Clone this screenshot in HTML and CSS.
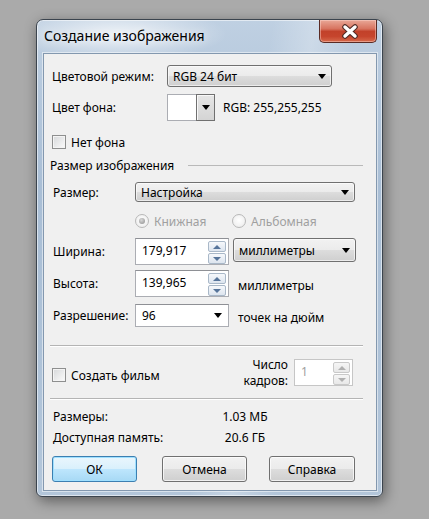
FILE: index.html
```html
<!DOCTYPE html>
<html lang="ru">
<head>
<meta charset="utf-8">
<title>Создание изображения</title>
<link rel="stylesheet" href="styles.css">
</head>
<body>
<div class="page">
  <div class="window">
    <div class="titlebar">
      <span class="title">Создание изображения</span>
      <div class="close">
        <svg width="18" height="15" viewBox="0 0 18 15">
          <path d="M4 3 L14 12 M14 3 L4 12" stroke="#4f2a24" stroke-width="5.6" stroke-linecap="round" fill="none"/>
          <path d="M4 3 L14 12 M14 3 L4 12" stroke="#ffffff" stroke-width="3.4" stroke-linecap="round" fill="none"/>
        </svg>
      </div>
    </div>
    <div class="client">
      <div class="row r-mode">
        <span class="lbl w-top">Цветовой режим:</span>
        <div class="combo c-mode"><span>RGB 24 бит</span><i class="arrow"></i></div>
      </div>
      <div class="row r-bg">
        <span class="lbl w-top">Цвет фона:</span>
        <div class="colorpick"><span class="swatch"></span><span class="drop"><i class="arrow"></i></span></div>
        <span class="rgb">RGB: 255,255,255</span>
      </div>
      <div class="row r-nobg">
        <span class="check"></span><span class="cklbl">Нет фона</span>
      </div>
      <div class="group-head"><span>Размер изображения</span><span class="gline"></span></div>
      <div class="row r-size sub">
        <span class="lbl w-grp">Размер:</span>
        <div class="combo c-size"><span>Настройка</span><i class="arrow"></i></div>
      </div>
      <div class="row r-orient">
        <span class="opt"><span class="radio checked"></span><span class="dis rlbl">Книжная</span></span>
        <span class="opt"><span class="radio"></span><span class="dis rlbl">Альбомная</span></span>
      </div>
      <div class="row r-width sub">
        <span class="lbl w-grp">Ширина:</span>
        <div class="spin"><span class="val">179,917</span><span class="btns"><span class="sb up"></span><span class="sb dn"></span></span></div>
        <div class="combo c-unit"><span>миллиметры</span><i class="arrow"></i></div>
      </div>
      <div class="row r-height sub">
        <span class="lbl w-grp">Высота:</span>
        <div class="spin"><span class="val">139,965</span><span class="btns"><span class="sb up"></span><span class="sb dn"></span></span></div>
        <span class="unit">миллиметры</span>
      </div>
      <div class="row r-res sub">
        <span class="lbl w-grp">Разрешение:</span>
        <div class="edcombo"><span>96</span><i class="arrow"></i></div>
        <span class="unit">точек на дюйм</span>
      </div>
      <div class="sep s1"></div>
      <div class="row r-film">
        <span class="check film-check"></span><span class="cklbl film-lbl">Создать фильм</span>
        <div class="frames">
          <span class="frlbl">Число<br>кадров:</span>
          <div class="spin dspin"><span class="val">1</span><span class="btns"><span class="sb up"></span><span class="sb dn"></span></span></div>
        </div>
      </div>
      <div class="sep s2"></div>
      <div class="row info i1 sub"><span class="ilbl">Размеры:</span><span class="ival">1.03 МБ</span></div>
      <div class="row info i2 sub"><span class="ilbl">Доступная память:</span><span class="ival">20.6 ГБ</span></div>
      <div class="buttons">
        <button class="btn ok">ОК</button>
        <button class="btn cancel">Отмена</button>
        <button class="btn help">Справка</button>
      </div>
    </div>
  </div>
</div>
</body>
</html>
```

FILE: styles.css
```css
* { box-sizing: border-box; }
html, body { margin: 0; padding: 0; }
body {
  width: 429px;
  height: 519px;
  overflow: hidden;
  background: #aaaaaa;
  font-family: "Noto Sans", "Open Sans", sans-serif;
  font-size: 12px;
  color: #000;
}
.page { padding: 19px 0 0 36px; }

.window {
  width: 347px;
  height: 478px;
  border: 1px solid #3b444e;
  border-radius: 7px 7px 6px 6px;
  padding: 0 5px 5px 6px;
  background:
    radial-gradient(ellipse 110px 26px at 80px 14px, rgba(255,255,255,0.75), rgba(255,255,255,0)),
    linear-gradient(100deg, rgba(255,255,255,0) 55%, rgba(255,255,255,0.25) 65%, rgba(255,255,255,0) 75%),
    linear-gradient(to bottom, #bfd0e2 0%, #a9bed5 35%, #b3c6da 100%);
  box-shadow: inset 0 0 0 1px rgba(255,255,255,0.55), 2px 4px 14px rgba(0,0,0,0.45);
  display: flex;
  flex-direction: column;
}

.titlebar {
  height: 33px;
  display: flex;
  align-items: flex-start;
}
.title {
  margin: 7px 0 0 1px;
  font-size: 14px;
  line-height: 18px;
  color: #000;
  text-shadow: 0 0 8px rgba(255,255,255,0.9);
}
.close {
  margin-left: auto;
  width: 58px;
  height: 23px;
  border: 1px solid #5a2b24;
  border-top: none;
  border-radius: 0 0 5px 5px;
  background: linear-gradient(to bottom, #e9a898 0%, #d7735f 40%, #c2412a 52%, #c6452d 75%, #d66a4c 100%);
  box-shadow: inset 0 0 0 1px rgba(255,220,210,0.45);
  display: flex;
  align-items: center;
  justify-content: center;
  padding-left: 3px;
}

.client {
  height: 438px;
  border: 1px solid #8398af;
  background: #f0f0f0;
  padding: 11px 0 0 8px;
  box-shadow: 0 0 0 1px rgba(255,255,255,0.5);
}

.row { display: flex; align-items: center; }
.sub { padding-left: 1px; }
.lbl { white-space: nowrap; }
.w-top { width: 115px; }
.w-grp { width: 82px; }

.arrow {
  display: block;
  width: 0;
  height: 0;
  border-left: 4px solid transparent;
  border-right: 4px solid transparent;
  border-top: 5px solid #000;
}

.combo {
  display: flex;
  align-items: center;
  justify-content: space-between;
  border: 1px solid #707070;
  border-radius: 3px;
  background: linear-gradient(to bottom, #f2f2f2 0%, #ebebeb 50%, #dddddd 50%, #cfcfcf 100%);
  box-shadow: inset 0 0 0 1px rgba(255,255,255,0.6);
  padding: 0 5px 0 5px;
}
.r-mode { height: 22px; }
.c-mode { width: 165px; height: 22px; }
.r-bg { height: 27px; margin-top: 7px; }
.colorpick { display: flex; height: 27px; }
.swatch {
  width: 29px; height: 27px;
  background: #fff;
  border: 1px solid #abadb3;
  border-right: none;
}
.drop {
  width: 19px; height: 27px;
  border: 1px solid #707070;
  background: linear-gradient(to bottom, #e6e6e6, #d4d4d4);
  box-shadow: inset 1px 1px 0 #f8f8f8;
  display: flex; align-items: center; justify-content: center;
}
.rgb { margin-left: 8px; }

.check {
  width: 14px; height: 14px;
  border: 1px solid #8e8f8f;
  background: linear-gradient(135deg, #d6d8da, #fbfbfb);
  box-shadow: inset 0 0 0 1px #f4f4f4;
  flex: none;
}
.cklbl { margin-left: 5px; }
.r-nobg { height: 14px; margin-top: 14px; }

.group-head {
  display: flex;
  align-items: center;
  height: 16px;
  margin-top: 8px;
  margin-left: -2px;
}
.gline {
  width: 175px;
  margin-left: auto;
  margin-right: 13px;
  height: 1px;
  background: #b9b9b9;
}

.r-size { height: 20px; margin-top: 9px; }
.c-size { width: 220px; height: 20px; }

.r-orient { height: 14px; margin-top: 12px; padding-left: 83px; }
.opt { display: flex; align-items: center; width: 97px; }
.radio {
  width: 14px; height: 14px;
  border-radius: 50%;
  border: 1px solid #b8b8b8;
  background: radial-gradient(circle at 50% 45%, #ffffff, #e9e9e9);
  flex: none;
  position: relative;
}
.radio.checked::after {
  content: "";
  position: absolute;
  left: 3px; top: 3px;
  width: 6px; height: 6px;
  border-radius: 50%;
  background: radial-gradient(circle at 40% 35%, #d8d8d8, #8c8c8c);
}
.rlbl { margin-left: 5px; }
.dis { color: #a0a0a0; }

.spin {
  width: 94px;
  height: 27px;
  background: #fff;
  border: 1px solid #abadb3;
  border-top-color: #8e9095;
  display: flex;
  align-items: flex-start;
  padding: 3px 0 0 6px;
  flex: none;
}
.btns {
  margin-left: auto;
  margin-right: 2px;
  margin-top: -1px;
  display: flex;
  flex-direction: column;
  gap: 1px;
}
.sb {
  width: 18px; height: 11px;
  border: 1px solid #a9b8c8;
  border-radius: 2px;
  background: linear-gradient(to bottom, #f6f8fb, #dde5ef);
  display: flex; align-items: center; justify-content: center;
}
.sb::after {
  content: "";
  width: 0; height: 0;
  border-left: 4px solid transparent;
  border-right: 4px solid transparent;
}
.sb.up::after { border-bottom: 4px solid #56749a; }
.sb.dn::after { border-top: 4px solid #56749a; }

.r-width { height: 27px; margin-top: 10px; }
.c-unit { width: 123px; height: 24px; margin-left: 4px; margin-top: -3px; }
.r-height { height: 27px; margin-top: 5px; }
.unit { margin-left: 9px; margin-top: 3px; }
.r-res { height: 23px; margin-top: 7px; }
.edcombo {
  width: 94px; height: 23px;
  background: #fff;
  border: 1px solid #abadb3;
  border-top-color: #8e9095;
  display: flex; align-items: center; justify-content: space-between;
  padding: 0 6px 0 6px;
}

.sep {
  margin-left: -2px;
  width: 313px;
  height: 2px;
  border-top: 1px solid #b4b4b4;
  border-bottom: 1px solid #ffffff;
}
.s1 { margin-top: 18px; }
.s2 { margin-top: 12px; }

.r-film { height: 27px; margin-top: 12px; }
.film-check, .film-lbl { margin-top: 5px; }
.frames { margin-left: auto; margin-right: 23px; display: flex; align-items: center; }
.frlbl { text-align: right; line-height: 16px; margin-right: 6px; margin-top: 1px; }
.dspin { width: 59px; border-color: #c6c6c6; padding-left: 6px; }
.dspin .val { color: #a0a0a0; }
.dspin .sb { width: 17px; border-color: #c9c9c9; background: linear-gradient(to bottom, #f6f6f6, #e8e8e8); }
.dspin .sb.up::after { border-bottom-color: #b0b0b0; }
.dspin .sb.dn::after { border-top-color: #b0b0b0; }

.info { height: 16px; }
.i1 { margin-top: 8px; }
.i2 { margin-top: 5px; }
.ilbl { width: 150px; }
.ival { width: 84px; text-align: center; }

.buttons { display: flex; margin-top: 11px; }
.btn {
  font-family: inherit;
  font-size: 12px;
  color: #000;
  width: 85px;
  height: 26px;
  border: 1px solid #707070;
  border-radius: 3px;
  background: linear-gradient(to bottom, #f2f2f2 0%, #ebebeb 50%, #dddddd 50%, #cfcfcf 100%);
  box-shadow: inset 0 0 0 1px rgba(255,255,255,0.7);
  padding: 0;
}
.ok {
  border-color: #3c7fb1;
  background: linear-gradient(to bottom, #eaf6fd 0%, #d9f0fc 50%, #bee6fd 50%, #a7d9f5 100%);
  box-shadow: inset 0 0 0 1px #9fe0ff;
}
.cancel { margin-left: 25px; }
.help { margin-left: 22px; width: 86px; }
```
